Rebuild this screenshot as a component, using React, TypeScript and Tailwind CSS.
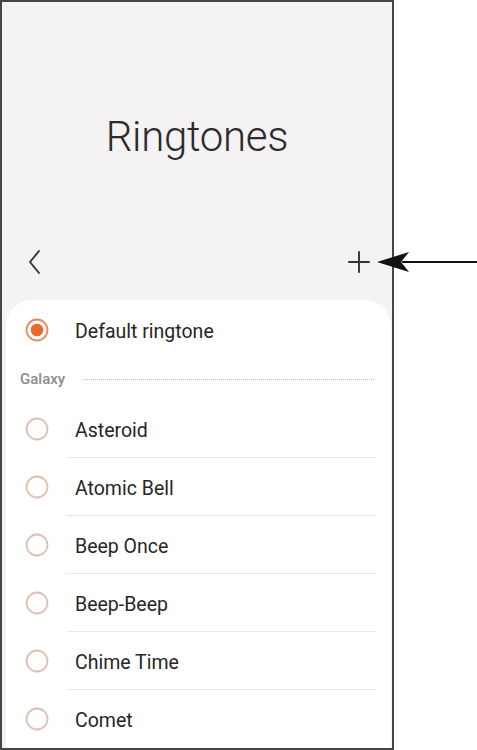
import React from "react";

const items = ["Asteroid", "Atomic Bell", "Beep Once", "Beep-Beep", "Chime Time", "Comet"];

function Radio({ selected }: { selected?: boolean }) {
  return (
    <svg width="24" height="24" viewBox="0 0 24 24" className="shrink-0">
      {selected ? (
        <>
          <circle cx="12" cy="12" r="10.5" fill="none" stroke="#e9895a" strokeWidth="1.8" />
          <circle cx="12" cy="12" r="6.3" fill="#e86a2c" />
        </>
      ) : (
        <circle cx="12" cy="12" r="10.5" fill="none" stroke="#dcc1b2" strokeWidth="1.8" />
      )}
    </svg>
  );
}

export default function App() {
  return (
    <div
      className="relative w-[477px] h-[750px] bg-white overflow-hidden"
      style={{ fontFamily: "Roboto, 'Noto Sans', sans-serif" }}
    >
      <div className="w-[394px] h-[750px] border-2 border-[#454545] bg-[#f5f2f4] flex flex-col overflow-hidden">
        <div className="pt-[108px] flex justify-center">
          <div className="text-[42px] leading-[54px] font-light text-[#2b2b2b] tracking-[-0.3px]">Ringtones</div>
        </div>
        <div className="mt-[70px] h-[56px] flex items-center justify-between pl-[25px] pr-[22px]">
          <svg width="16" height="26" viewBox="0 0 16 26">
            <path d="M12 2 L3 13 L12 24" fill="none" stroke="#333" strokeWidth="1.9" strokeLinecap="round" strokeLinejoin="round" />
          </svg>
          <svg width="22" height="22" viewBox="0 0 22 22">
            <path d="M1 11 H21 M11 1 V21" fill="none" stroke="#333" strokeWidth="1.9" strokeLinecap="round" />
          </svg>
        </div>
        <div className="mt-[10px] ml-[4px] mr-[1px] flex-1 bg-white rounded-t-[26px] pt-[2px] overflow-hidden">
          <div className="h-[56px] flex items-center pl-[19px]">
            <Radio selected />
            <span className="ml-[26px] pt-[3px] text-[19.5px] text-[#262626]">Default ringtone</span>
          </div>
          <div className="h-[42px] flex items-center pl-[14px] pr-[17px]">
            <span className="text-[15px] font-medium text-[#8c8c8c]">Galaxy</span>
            <div className="ml-[18px] flex-1 border-t-[1.5px] border-dotted border-[#bdbdbd]" />
          </div>
          {items.map((name, i) => (
            <div key={name} className="h-[58px] flex items-center pl-[19px] relative">
              <Radio />
              <span className="ml-[26px] pt-[3px] text-[19.5px] text-[#262626]">{name}</span>
              {i < items.length - 1 && (
                <div className="absolute bottom-0 left-[60px] right-[15px] h-[1px] bg-[#e8e8e8]" />
              )}
            </div>
          ))}
        </div>
      </div>
      <svg className="absolute left-[376px] top-[251px]" width="101" height="22" viewBox="0 0 101 22">
        <path d="M1 11 L33 1 L25 11 L33 21 Z" fill="#111" />
        <path d="M26 11 H101" stroke="#111" strokeWidth="2.2" />
      </svg>
    </div>
  );
}
